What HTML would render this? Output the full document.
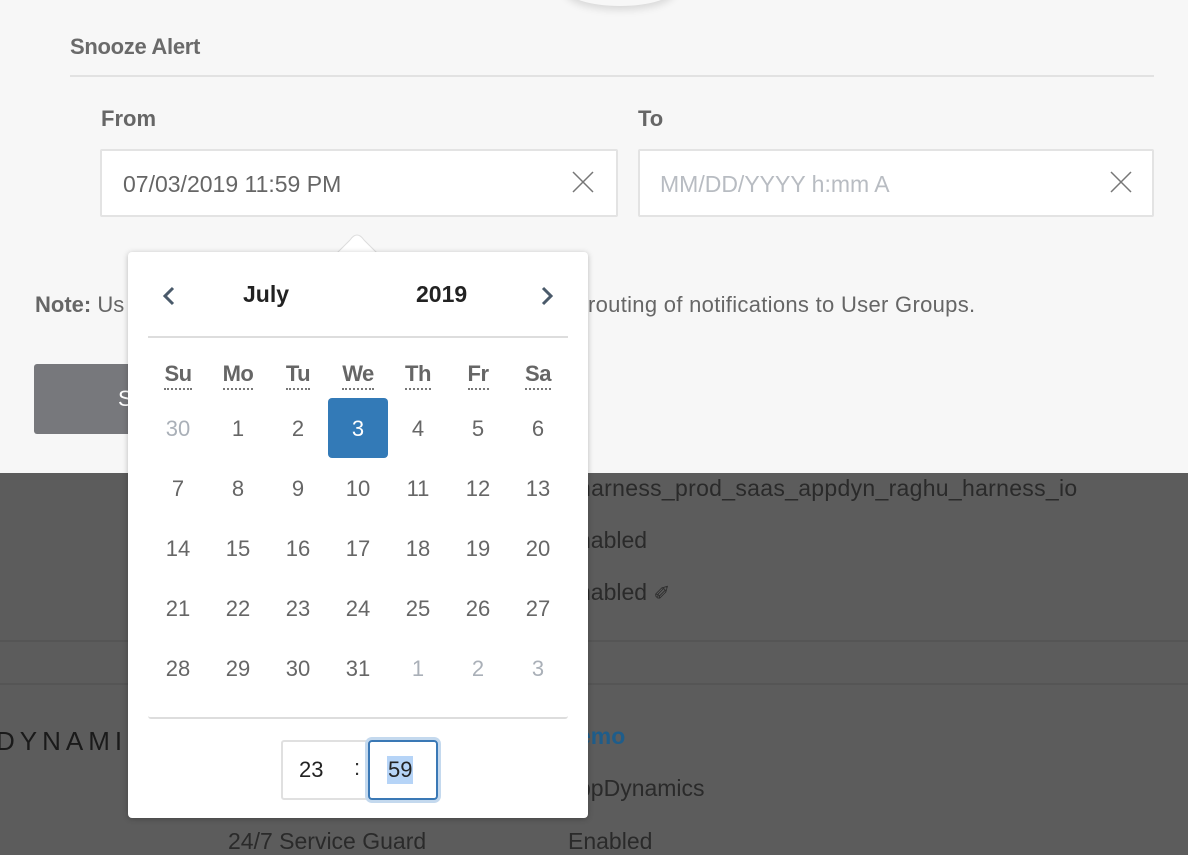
<!DOCTYPE html>
<html><head><style>
*{margin:0;padding:0;box-sizing:border-box}
body{width:1188px;height:844px;overflow:hidden;position:relative;font-family:"Liberation Sans",sans-serif;background:#5c5c5c;color:#555}
.top{position:absolute;left:0;top:0;width:1188px;height:473px;background:#f7f7f7}
.a{position:absolute;white-space:nowrap}
.box{position:absolute;background:#fff;border:2px solid #e3e3e3;border-radius:2px}
.dk{color:#2a2a2a;font-size:23px}
.cal{position:absolute;left:128px;top:252px;width:460px;height:566px;background:#fff;border-radius:4px;box-shadow:0 1px 6px rgba(0,0,0,.25)}
.d{position:absolute;width:60px;text-align:center;font-size:22px;color:#666;transform:translateY(-50%)}
.g{color:#aab0b8}
.w{position:absolute;width:60px;text-align:center;font-size:22px;color:#666;font-weight:bold;top:109px}
.w span{border-bottom:2px dotted #777;padding-bottom:2px;letter-spacing:-.5px}
</style></head><body>
<div class="top"></div>
<div class="a" style="left:565px;top:-30px;width:110px;height:36px;border-radius:50%;box-shadow:0 4px 8px rgba(0,0,0,.12)"></div>
<div class="a" style="left:70px;top:34px;font-size:22px;color:#6a6a6a;font-weight:bold;letter-spacing:-.3px">Snooze Alert</div>
<div class="a" style="left:70px;top:75px;width:1084px;height:2px;background:#e2e2e2"></div>
<div class="a" style="left:101px;top:106px;font-size:22px;color:#666;font-weight:bold">From</div>
<div class="a" style="left:638px;top:106px;font-size:22px;color:#666;font-weight:bold">To</div>
<div class="box" style="left:100px;top:149px;width:518px;height:68px"></div>
<div class="a" style="left:123px;top:171px;font-size:23px;color:#666">07/03/2019 11:59 PM</div>
<svg class="a" style="left:572px;top:171px" width="22" height="22"><path d="M1 1L21 21M21 1L1 21" stroke="#777" stroke-width="1.5"/></svg>
<div class="box" style="left:638px;top:149px;width:516px;height:68px"></div>
<div class="a" style="left:660px;top:171px;font-size:23px;color:#b8bcc2">MM/DD/YYYY h:mm A</div>
<svg class="a" style="left:1110px;top:171px" width="22" height="22"><path d="M1 1L21 21M21 1L1 21" stroke="#777" stroke-width="1.5"/></svg>
<div class="a" style="left:35px;top:292px;font-size:22px;color:#666"><b>Note:</b> Us</div>
<div class="a" style="left:588px;top:292px;font-size:22px;color:#666;letter-spacing:.3px">routing of notifications to User Groups.</div>
<div class="a" style="left:34px;top:364px;width:200px;height:70px;background:#77787c;border-radius:3px;color:#fff;font-size:22px;padding:22px 0 0 84px">S</div>

<div class="a" style="left:0;top:640px;width:1188px;height:2px;background:#555"></div>
<div class="a" style="left:0;top:683px;width:1188px;height:2px;background:#555"></div>
<div class="a dk" style="left:578px;top:475px;letter-spacing:.3px">harness_prod_saas_appdyn_raghu_harness_io</div>
<div class="a dk" style="left:578px;top:527px">nabled</div>
<div class="a dk" style="left:578px;top:579px">nabled <span style="font-size:20px">✐</span></div>
<div class="a" style="left:-4px;top:726px;font-size:26px;color:#1a1a1a;letter-spacing:5px">DYNAMICS</div>
<div class="a" style="left:578px;top:723px;font-size:23px;color:#1f5d8a;font-weight:bold">emo</div>
<div class="a dk" style="left:578px;top:775px">ppDynamics</div>
<div class="a dk" style="left:228px;top:828px">24/7 Service Guard</div>
<div class="a dk" style="left:568px;top:828px">Enabled</div>

<svg class="a" style="left:336px;top:230px" width="44" height="26"><path d="M0 24L14 10Q21 0 28 10L42 24" fill="#fff" stroke="#ddd" stroke-width="1"/><rect x="0" y="23" width="44" height="4" fill="#fff"/></svg>
<div class="cal">
<svg class="a" style="left:34px;top:34px" width="14" height="20"><path d="M11 2L3 10L11 18" fill="none" stroke="#4a5a6a" stroke-width="3"/></svg>
<svg class="a" style="left:412px;top:34px" width="14" height="20"><path d="M3 2L11 10L3 18" fill="none" stroke="#4a5a6a" stroke-width="3"/></svg>
<div class="a" style="left:115px;top:29px;font-size:23px;color:#222;font-weight:bold">July</div>
<div class="a" style="left:288px;top:29px;font-size:23px;color:#222;font-weight:bold">2019</div>
<div class="a" style="left:20px;top:84px;width:420px;height:2px;background:#ddd"></div>
<div class="w" style="left:20px"><span>Su</span></div><div class="w" style="left:80px"><span>Mo</span></div><div class="w" style="left:140px"><span>Tu</span></div><div class="w" style="left:200px"><span>We</span></div><div class="w" style="left:260px"><span>Th</span></div><div class="w" style="left:320px"><span>Fr</span></div><div class="w" style="left:380px"><span>Sa</span></div>
<div class="a" style="left:200px;top:146px;width:60px;height:60px;background:#337ab7;border-radius:4px"></div>
<div class="d g" style="left:20px;top:177px">30</div><div class="d" style="left:80px;top:177px">1</div><div class="d" style="left:140px;top:177px">2</div><div class="d" style="left:200px;top:177px;color:#fff">3</div><div class="d" style="left:260px;top:177px">4</div><div class="d" style="left:320px;top:177px">5</div><div class="d" style="left:380px;top:177px">6</div>
<div class="d" style="left:20px;top:237px">7</div><div class="d" style="left:80px;top:237px">8</div><div class="d" style="left:140px;top:237px">9</div><div class="d" style="left:200px;top:237px">10</div><div class="d" style="left:260px;top:237px">11</div><div class="d" style="left:320px;top:237px">12</div><div class="d" style="left:380px;top:237px">13</div>
<div class="d" style="left:20px;top:297px">14</div><div class="d" style="left:80px;top:297px">15</div><div class="d" style="left:140px;top:297px">16</div><div class="d" style="left:200px;top:297px">17</div><div class="d" style="left:260px;top:297px">18</div><div class="d" style="left:320px;top:297px">19</div><div class="d" style="left:380px;top:297px">20</div>
<div class="d" style="left:20px;top:357px">21</div><div class="d" style="left:80px;top:357px">22</div><div class="d" style="left:140px;top:357px">23</div><div class="d" style="left:200px;top:357px">24</div><div class="d" style="left:260px;top:357px">25</div><div class="d" style="left:320px;top:357px">26</div><div class="d" style="left:380px;top:357px">27</div>
<div class="d" style="left:20px;top:417px">28</div><div class="d" style="left:80px;top:417px">29</div><div class="d" style="left:140px;top:417px">30</div><div class="d" style="left:200px;top:417px">31</div><div class="d g" style="left:260px;top:417px">1</div><div class="d g" style="left:320px;top:417px">2</div><div class="d g" style="left:380px;top:417px">3</div>
<div class="a" style="left:20px;top:464px;width:420px;height:3px;border-bottom:2px solid #ddd;border-radius:0 0 4px 4px"></div>
<div class="a" style="left:153px;top:488px;width:88px;height:60px;border:2px solid #e0e0e0;border-radius:3px"></div>
<div class="a" style="left:171px;top:505px;font-size:22px;color:#222">23</div>
<div class="a" style="left:226px;top:503px;font-size:22px;color:#333">:</div>
<div class="a" style="left:240px;top:488px;width:70px;height:60px;border:2px solid #3a78b5;border-radius:4px;box-shadow:0 0 0 3px #c4d9ee"></div>
<div class="a" style="left:259px;top:504px;font-size:22px;color:#222;background:#b6d4f7;padding:1px 1px">59</div>
</div>
</body></html>
